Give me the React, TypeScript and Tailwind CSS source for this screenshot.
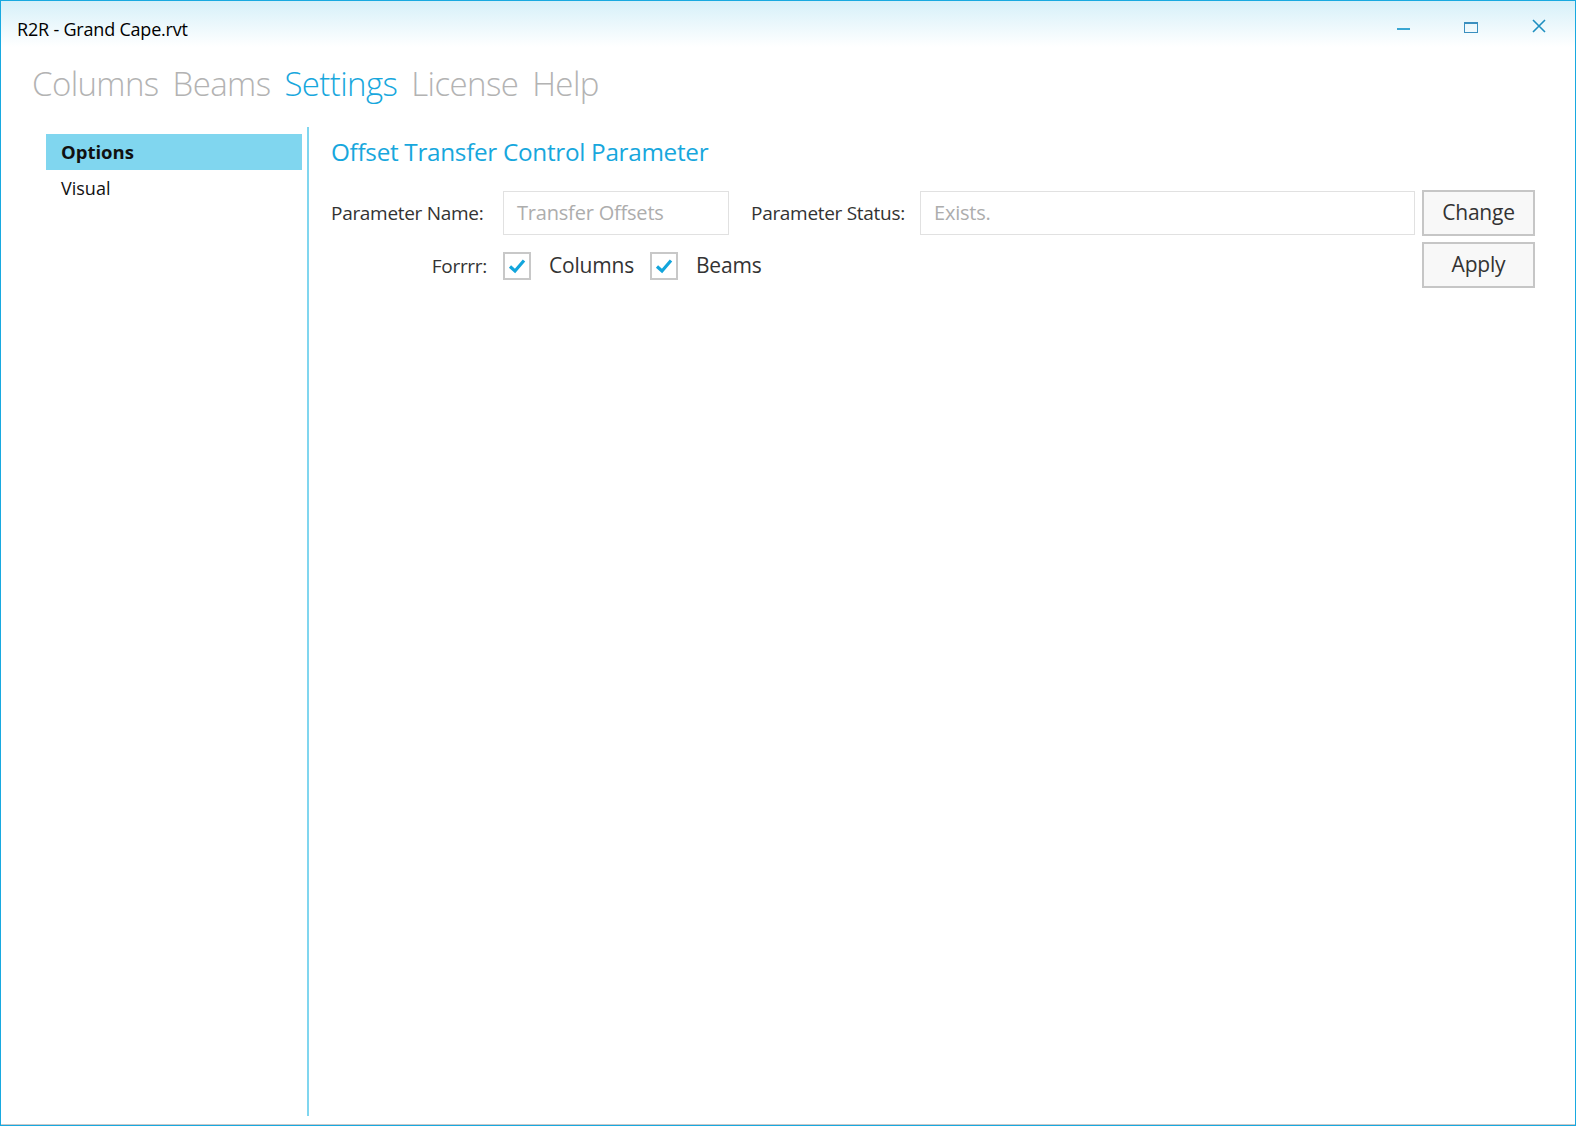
import React from "react";

const Check = () => (
  <div className="w-[28px] h-[28px] border-2 border-[#c8c8c8] bg-white flex items-center justify-center">
    <svg width="18" height="16" viewBox="0 0 18 16">
      <path d="M2 8.5 L7 13 L16 2.5" fill="none" stroke="#12a5dc" strokeWidth="3.2" />
    </svg>
  </div>
);

export default function App() {
  return (
    <div
      className="w-[1576px] h-[1126px] bg-white border border-[#18a9e0] flex flex-col overflow-hidden"
      style={{ fontFamily: '"Open Sans", "Noto Sans", sans-serif' }}
    >
      {/* title bar */}
      <div className="h-[46px] shrink-0 bg-gradient-to-b from-[#d6f0f9] to-white flex items-center">
        <div className="pl-[16px] text-[18px] text-black flex-1 pt-[10px] tracking-[-0.2px]">R2R - Grand Cape.rvt</div>
        <div className="flex h-full">
          <div className="w-[68px] flex items-center justify-center pt-[10px]">
            <div className="w-[13px] h-[2px] bg-[#3aa6d2]" />
          </div>
          <div className="w-[68px] flex items-center justify-center pt-[6px]">
            <div className="w-[14px] h-[11px] border border-[#3a8fbf] border-t-2" />
          </div>
          <div className="w-[68px] flex items-center justify-center pt-[4px] mr-[2px]">
            <svg width="14" height="14" viewBox="0 0 14 14">
              <path d="M1 1 L13 13 M13 1 L1 13" stroke="#1e8fc0" strokeWidth="1.6" />
            </svg>
          </div>
        </div>
      </div>
      {/* tabs */}
      <div className="h-[80px] shrink-0 flex items-center pl-[31px] gap-[14px] text-[33px] font-light text-[#b3b3b3] tracking-[-0.6px] pb-[6px]">
        <span>Columns</span>
        <span>Beams</span>
        <span className="text-[#17a7dd]">Settings</span>
        <span>License</span>
        <span>Help</span>
      </div>
      {/* body */}
      <div className="flex flex-1 min-h-0 pb-[8px]">
        <div className="w-[306px] shrink-0 pl-[45px] pr-[5px] pt-[7px]">
          <div className="h-[36px] bg-[#80d6ef] flex items-center pl-[15px] text-[18.5px] font-bold text-[#111]">Options</div>
          <div className="h-[36px] flex items-center pl-[15px] text-[18px] text-[#111]">Visual</div>
        </div>
        <div className="w-[2px] bg-[#80d6ef]" />
        <div className="flex-1 pl-[22px] pr-[40px] pt-[8px]">
          <div className="text-[24.3px] text-[#17a7dd] tracking-[-0.3px] h-[34px] flex items-center">Offset Transfer Control Parameter</div>
          <div className="flex items-center mt-[21px] h-[46px]">
            <div className="w-[172px] text-[19px] text-[#333] tracking-[-0.3px]">Parameter Name:</div>
            <div className="w-[226px] h-[44px] border border-[#e1e1e1] flex items-center pl-[13px] text-[20px] text-[#adadad] tracking-[-0.2px]">Transfer Offsets</div>
            <div className="w-[191px] pl-[22px] text-[19px] text-[#333] tracking-[-0.3px]">Parameter Status:</div>
            <div className="w-[495px] h-[44px] border border-[#e1e1e1] flex items-center pl-[13px] text-[20px] text-[#adadad] tracking-[-0.2px]">Exists.</div>
            <div className="flex-1" />
            <div className="w-[113px] h-[46px] border-2 border-[#c6c6c6] bg-[#f8f8f8] flex items-center justify-center text-[21px] text-[#333] tracking-[-0.2px]">Change</div>
          </div>
          <div className="flex items-center mt-[6px] h-[46px]">
            <div className="w-[156px] text-right text-[19px] text-[#333] tracking-[-0.3px] pt-[2px]">Forrrr:</div>
            <div className="ml-[16px] flex items-center pt-[2px]">
              <Check />
              <span className="ml-[18px] text-[21px] text-[#333] tracking-[-0.2px]">Columns</span>
              <div className="ml-[16px]"><Check /></div>
              <span className="ml-[18px] text-[21px] text-[#333] tracking-[-0.2px]">Beams</span>
            </div>
            <div className="flex-1" />
            <div className="w-[113px] h-[46px] border-2 border-[#c6c6c6] bg-[#f8f8f8] flex items-center justify-center text-[21px] text-[#333] tracking-[-0.2px]">Apply</div>
          </div>
        </div>
      </div>
      <div className="h-[1px] bg-[#c8c8c8] shrink-0" />
    </div>
  );
}
